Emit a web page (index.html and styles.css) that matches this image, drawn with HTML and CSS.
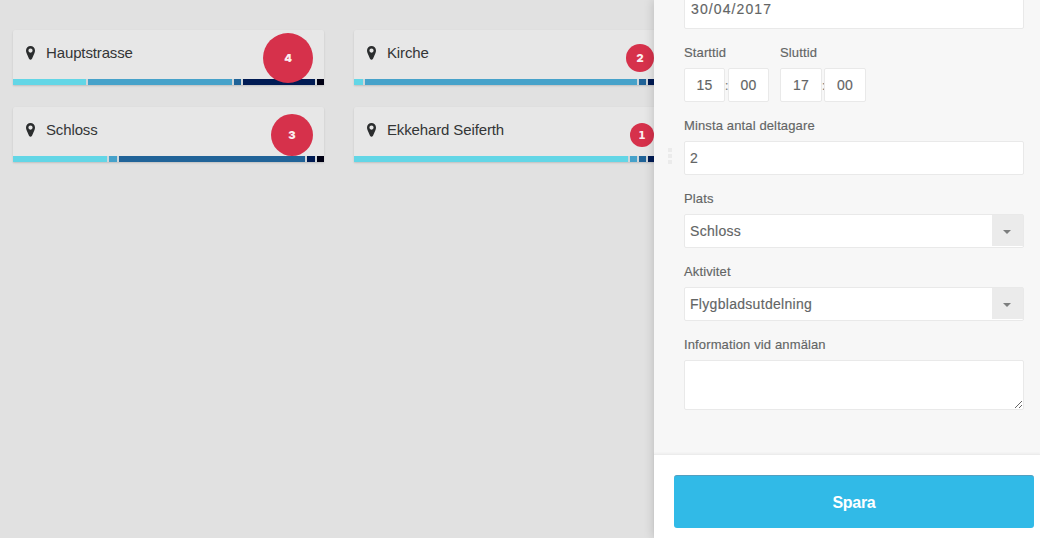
FILE: index.html
```html
<!DOCTYPE html>
<html lang="sv">
<head>
<meta charset="utf-8">
<title>Planering</title>
<link rel="stylesheet" href="styles.css">
</head>
<body>
<div class="app">
  <svg class="defs" width="0" height="0"><symbol id="pin" viewBox="0 0 9 14"><path fill-rule="evenodd" d="M4.500 0A4.500 4.500 0 0 0 0 4.500C0 5.400.2 6.300.5 7L3 12.700Q4.500 14.800 6 12.700L8.500 7C8.800 6.300 9 5.400 9 4.500A4.500 4.500 0 0 0 4.500 0zM4.500 2.500a2.100 2.100 0 1 1 0 4.200 2.100 2.100 0 0 1 0-4.200z"/></symbol></svg>
  <main class="locations">
    <article class="card">
      <div class="card-body"><svg class="pin"><use href="#pin"/></svg><h2>Hauptstrasse</h2></div>
      <div class="bar"><i class="c1" style="width:73px"></i><i class="c2" style="width:144px"></i><i class="c3" style="width:7px"></i><i class="c4" style="width:72px"></i><i class="c5" style="width:7px"></i></div>
      <b class="badge" style="width:50px;height:50px">4</b>
    </article>
    <article class="card">
      <div class="card-body"><svg class="pin"><use href="#pin"/></svg><h2>Kirche</h2></div>
      <div class="bar"><i class="c1" style="width:9px"></i><i class="c2" style="width:272px"></i><i class="c3" style="width:7px"></i><i class="c4" style="width:8px"></i><i class="c5" style="width:7px"></i></div>
      <b class="badge" style="width:28px;height:28px">2</b>
    </article>
    <article class="card">
      <div class="card-body"><svg class="pin"><use href="#pin"/></svg><h2>Schloss</h2></div>
      <div class="bar"><i class="c1" style="width:94px"></i><i class="c2" style="width:8px"></i><i class="c3" style="width:186px"></i><i class="c4" style="width:8px"></i><i class="c5" style="width:7px"></i></div>
      <b class="badge" style="width:42px;height:42px">3</b>
    </article>
    <article class="card">
      <div class="card-body"><svg class="pin"><use href="#pin"/></svg><h2>Ekkehard Seiferth</h2></div>
      <div class="bar"><i class="c1" style="width:274px"></i><i class="c2" style="width:7px"></i><i class="c3" style="width:7px"></i><i class="c4" style="width:8px"></i><i class="c5" style="width:7px"></i></div>
      <b class="badge one" style="width:24px;height:24px">1</b>
    </article>
  </main>
  <aside class="panel">
    <div class="grip"><i></i><i></i><i></i></div>
    <form class="form">
      <div class="input date">30/04/2017</div>
      <div class="times">
        <div class="field"><label>Starttid</label><div class="time"><div class="input">15</div><span>:</span><div class="input">00</div></div></div>
        <div class="field"><label>Sluttid</label><div class="time wide"><div class="input">17</div><span>:</span><div class="input">00</div></div></div>
      </div>
      <div class="field"><label>Minsta antal deltagare</label><div class="input">2</div></div>
      <div class="field"><label>Plats</label><div class="input select">Schloss<span class="arrow"></span></div></div>
      <div class="field"><label>Aktivitet</label><div class="input select">Flygbladsutdelning<span class="arrow"></span></div></div>
      <div class="field"><label>Information vid anmälan</label><textarea class="input"></textarea></div>
    </form>
    <footer class="footer"><button class="save">Spara</button></footer>
  </aside>
</div>
</body>
</html>
```
FILE: styles.css
```css
* { box-sizing: border-box; }
body { margin: 0; background: #e1e1e1; font-family: "Liberation Sans", Arial, sans-serif; overflow: hidden; }
.app { display: flex; height: 538px; overflow: hidden; }
.defs { display: none; }
.locations { flex: 0 0 654px; min-width: 0; width: 654px; overflow: hidden; display: grid; grid-template-columns: 311px 311px; gap: 22px 30px; align-content: start; padding: 30px 0 0 13px; }
.card { position: relative; height: 55px; display: flex; flex-direction: column; background: #e7e7e7; border-radius: 2px 2px 0 0; box-shadow: 0 1px 2px rgba(0, 0, 0, .15); }
.card-body { flex: 1; display: flex; align-items: flex-start; padding: 16px 0 0 13px; }
.pin { flex: none; width: 9px; height: 14px; fill: #2b2d2e; }
h2 { margin: -2px 0 0 11px; font-size: 15px; line-height: 18px; font-weight: 400; letter-spacing: -.13px; color: #333536; white-space: nowrap; }
.bar { display: flex; gap: 2px; height: 6px; background: #cfd6da; }
.c1 { background: #63d6e6; }
.c2 { background: #46a2ca; }
.c3 { background: #206398; }
.c4 { background: #001b54; }
.c5 { background: #000014; }
.badge { position: absolute; right: 11px; top: 28px; transform: translateY(-50%); display: flex; align-items: center; justify-content: center; border-radius: 50%; background: #d6314b; color: #fbeef0; font: 900 11px Inter, sans-serif; }
.badge.one { font: 700 10.5px "DejaVu Sans", sans-serif; }
.panel { position: relative; z-index: 1; flex: 1; min-width: 0; display: flex; flex-direction: column; background: #f7f7f7; box-shadow: 0 0 10px rgba(0, 0, 0, .18); }
.grip { position: absolute; left: 14px; top: 148px; display: grid; gap: 2px; }
.grip i { width: 4px; height: 4px; background: #ebebeb; }
.form { height: 454px; display: flex; flex-direction: column; padding: 0 16px 0 30px; -webkit-text-stroke: .15px currentColor; }
.input { height: 34px; display: flex; align-items: center; padding: 0 5px; border: 1px solid #e9e9e9; border-radius: 2px; background: #fff; color: #636565; font-size: 14px; letter-spacing: .3px; }
.date { flex: none; margin-top: -10px; height: 39px; padding: 0 6px 1px; letter-spacing: 1.1px; }
.field { display: flex; flex-direction: column; padding-top: 15px; }
label { height: 24px; font-size: 13px; line-height: 17px; letter-spacing: .13px; color: #636565; white-space: nowrap; }
.times { display: flex; gap: 11px; }
.time { display: flex; width: 85px; justify-content: space-between; align-items: center; }
.time.wide { width: 86px; }
.time .input { width: 41px; padding: 0; justify-content: center; }
.time.wide .input { width: 42px; }
.time span { width: 3px; font-size: 12px; color: #777; line-height: 32px; padding-top: 2px; }
.time.wide span { width: 2px; }
.select { justify-content: space-between; padding-right: 0; }
.arrow { width: 31px; height: 31px; margin-bottom: 1px; background: #ebebeb; display: flex; align-items: center; justify-content: center; }
.arrow::after { content: ""; border: solid transparent; border-width: 4px 4px 0; border-top-color: #7c7e7e; margin: 2px 1px 0 0; }
textarea.input { width: 340px; height: 50px; resize: both; outline: 0; }
.footer { flex: 1; display: flex; padding: 20px 6px 10px 20px; border-top: 1px solid #ececec; background: #fff; box-shadow: 0 -1px 2px rgba(0, 0, 0, .04); }
.save { flex: 1; border: 0; border-top: 1px solid #529fc0; border-radius: 3px; background: #31bae7; color: #fff; font: 700 16px "Liberation Sans", Arial, sans-serif; letter-spacing: -.3px; padding: 2px 0 0; }
```
